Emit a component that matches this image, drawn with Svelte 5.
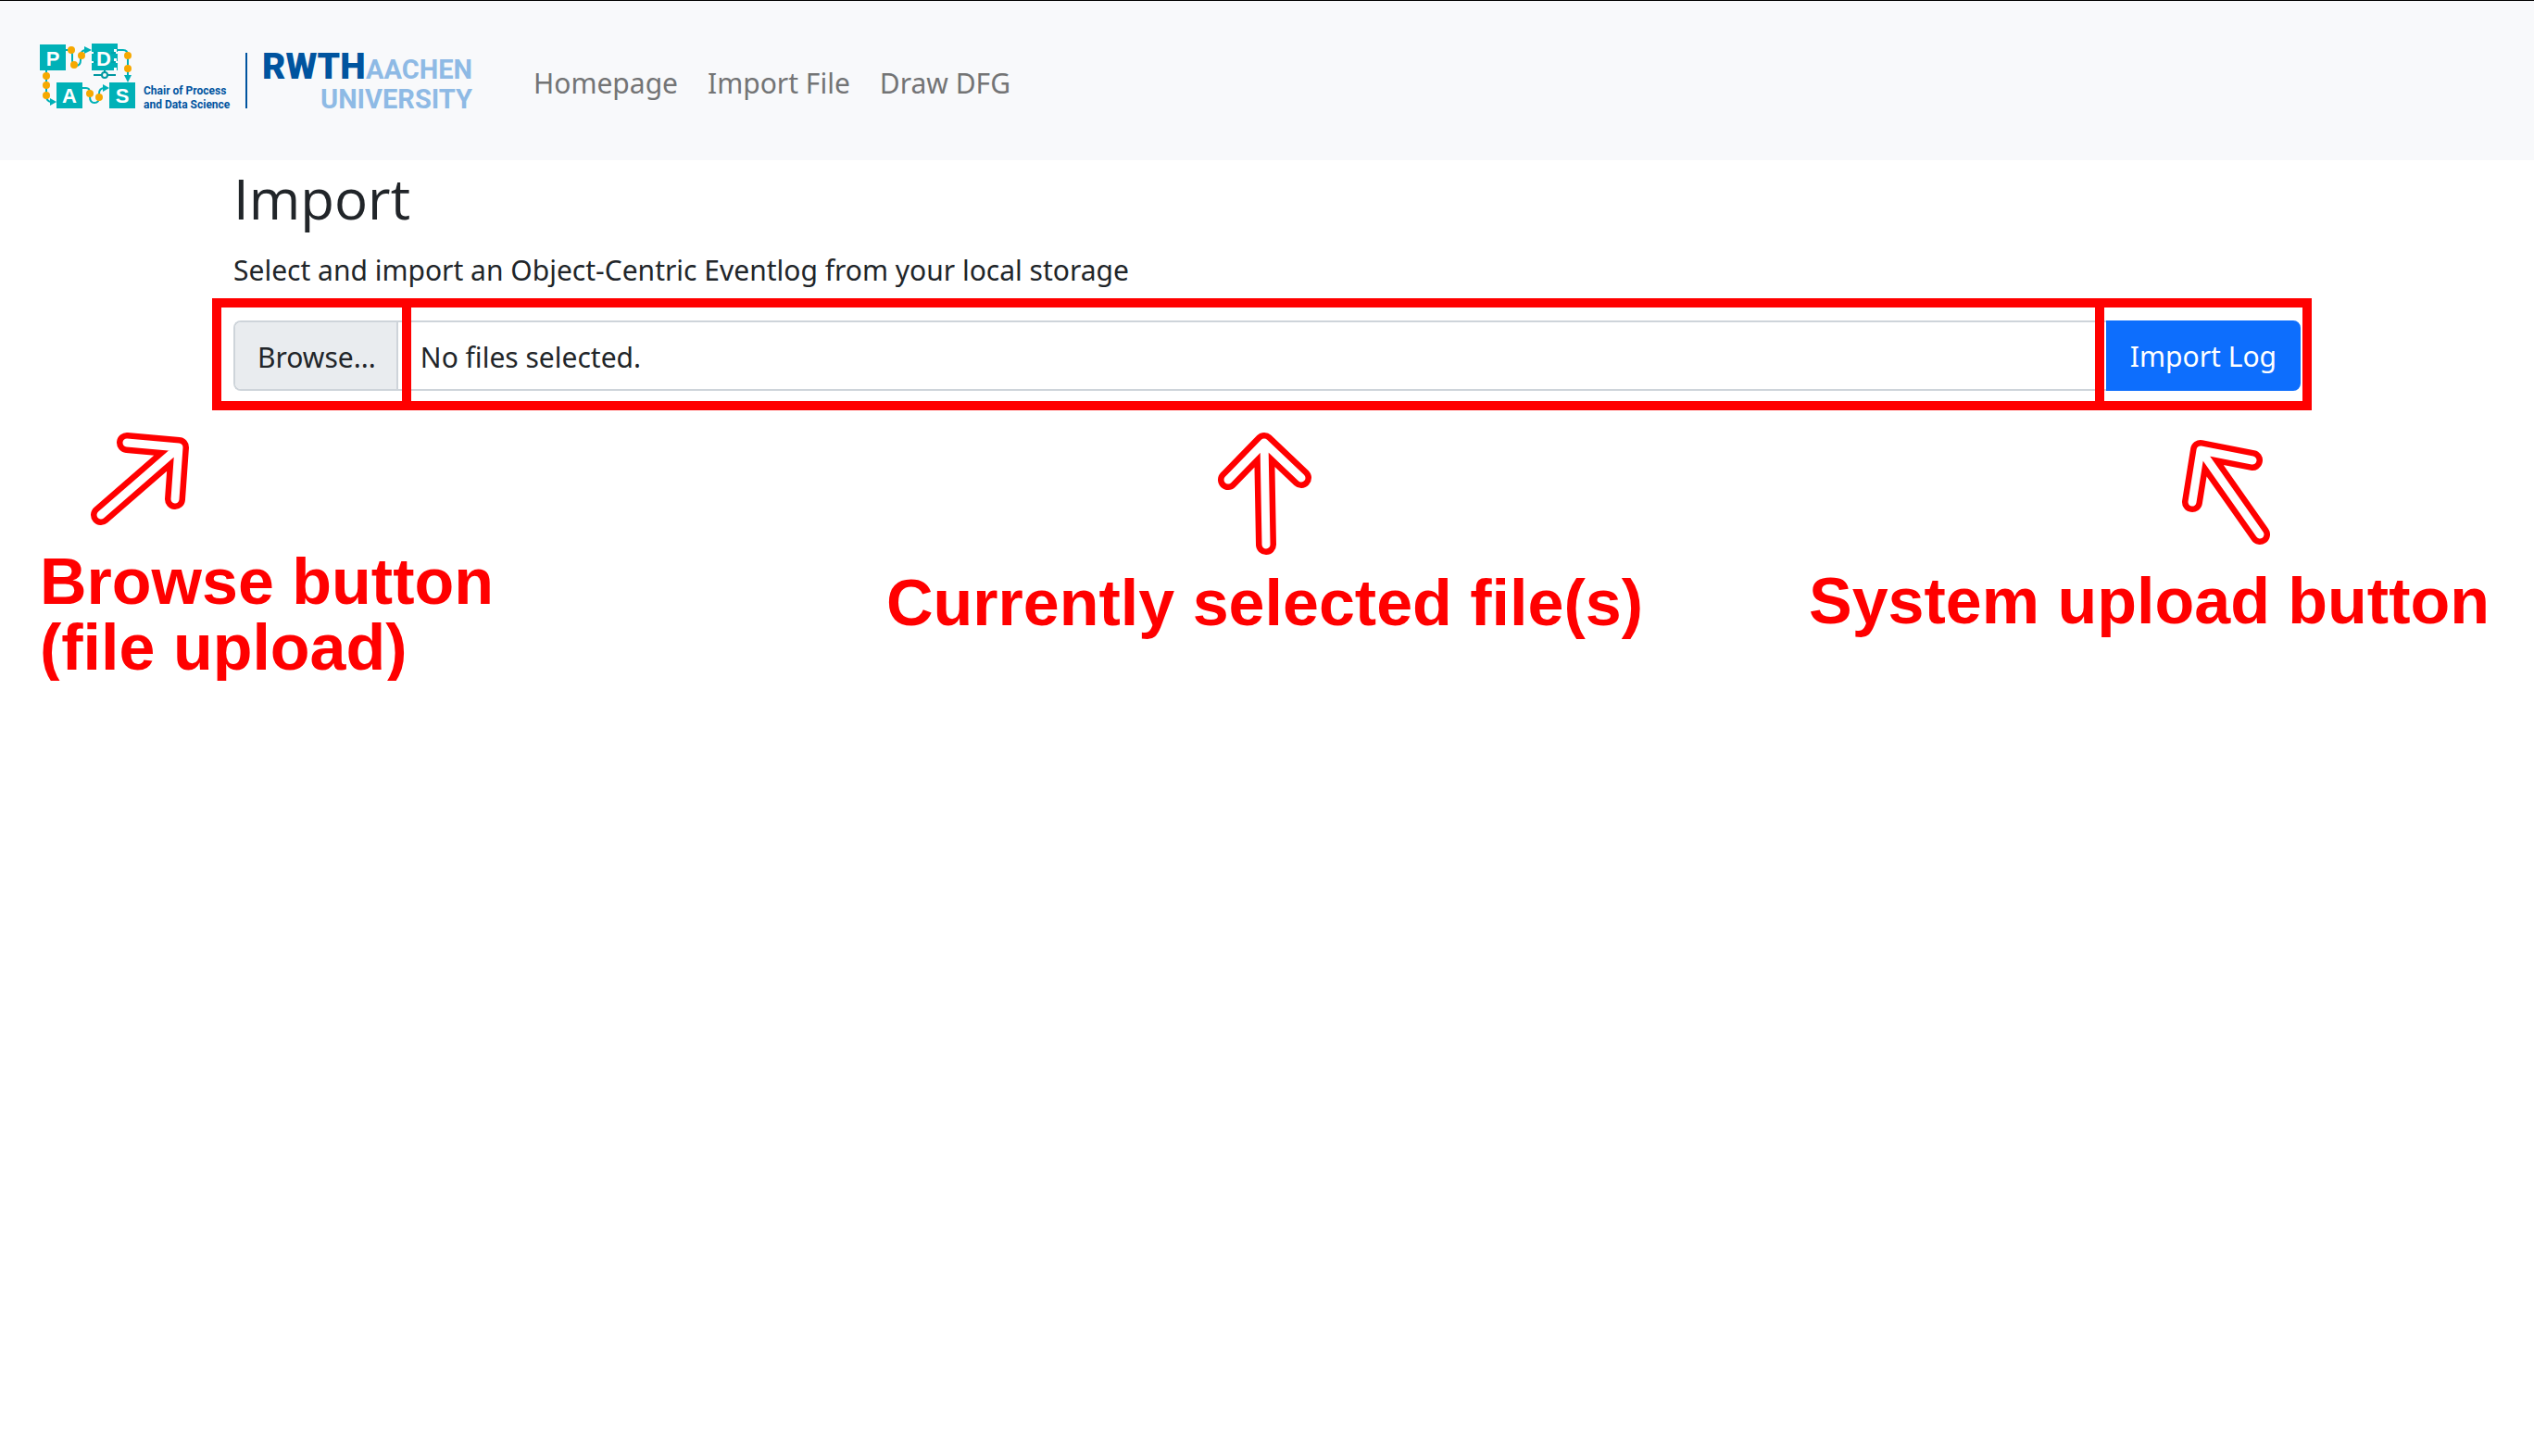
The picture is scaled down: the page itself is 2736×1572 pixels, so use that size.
<script>
  const links = ['Homepage', 'Import File', 'Draw DFG'];

  const callouts = [
    {
      kind: 'to-browse',
      lines: ['Browse button', '(file upload)'],
      width: 200,
      height: 127,
      arrow: 'M94 12 L150 17 L146 73 M150 17 L66 90'
    },
    {
      kind: 'to-name',
      lines: ['Currently selected file(s)'],
      width: 120,
      height: 150,
      arrow: 'M20 52 L59 12 L99 50 M59 12 L61 122'
    },
    {
      kind: 'to-submit',
      lines: ['System upload button'],
      width: 520,
      height: 148,
      arrow: 'M414 76 L423 20 L479 31 M423 20 L487 111'
    }
  ];
</script>

<header>
  <a class="brand" href="#home" aria-label="Chair of Process and Data Science, RWTH Aachen University">
    <svg width="470" height="80" viewBox="42 43 470 80">
      <g fill="none" stroke="#00b1b7" stroke-width="2">
        <path d="M71 54 H74 Q78 54 78 59 V65 Q78 71 82 71 Q87 71 87 65 V61 Q87 54 93 54" />
        <path d="M126 54 H133 Q138 54 138 60 V83" />
        <path d="M50 76 V103 Q50 110 56 110" />
        <path d="M89 95 H93 Q97 95 97 100 V104 Q97 111 102 111 Q107 111 107 105 V101 Q107 95 113 95" />
      </g>
      <g fill="#00b1b7">
        <path d="M91 50 L99 54 L91 58 Z" />
        <path d="M134 81 L138 89 L142 81 Z" />
        <path d="M54 106 L61 110 L54 114 Z" />
        <path d="M111 91 L118 95 L111 99 Z" />
        <rect x="43" y="48" width="28" height="28" />
        <path d="M99 47 H127 V56 H125 V58 H127 V66 H125 V68 H127 V76 H99 V68 H101 V66 H99 V58 H101 V56 H99 Z" />
        <rect x="61" y="89" width="28" height="28" />
        <rect x="118" y="89" width="28" height="28" />
      </g>
      <g fill="#f6a800">
        <circle cx="77" cy="54" r="4" />
        <circle cx="80" cy="70" r="4" />
        <circle cx="88" cy="60" r="4" />
        <circle cx="138" cy="60" r="4" />
        <circle cx="138" cy="74" r="4" />
        <circle cx="50" cy="82" r="4" />
        <circle cx="50" cy="92" r="4" />
        <circle cx="50" cy="103" r="4" />
        <circle cx="97" cy="101" r="4" />
        <circle cx="107" cy="105" r="4" />
      </g>
      <g fill="#fff">
        <rect x="123" y="53" width="3" height="3" />
        <rect x="123" y="63" width="3" height="3" />
        <rect x="123" y="73" width="3" height="3" />
      </g>
      <path d="M120 57 H125 M120 67 H125 M101 57 H105 M101 67 H105" stroke="#0098a1" stroke-width="1" />
      <g fill="#f8f9fb" stroke="#0098a1" stroke-width="2">
        <path d="M101 81 H125 M113 76 V78" />
        <circle cx="113" cy="81" r="3" />
      </g>
      <g class="tile" text-anchor="middle">
        <text x="57" y="71">P</text>
        <text x="112" y="71">D</text>
        <text x="75" y="111">A</text>
        <text x="132" y="111">S</text>
      </g>
      <g class="chair">
        <text x="155" y="102">Chair of Process</text>
        <text x="155" y="117">and Data Science</text>
      </g>
      <rect x="265" y="57" width="2" height="60" fill="#00549f" />
      <text class="rwth" x="283" y="85">RWTH</text>
      <text class="uni" x="510" y="85" text-anchor="end">AACHEN</text>
      <text class="uni" x="510" y="117" text-anchor="end">UNIVERSITY</text>
    </svg>
  </a>
  <nav>
    {#each links as link}
      <a href="#{link}">{link}</a>
    {/each}
  </nav>
</header>

<main>
  <h1>Import</h1>
  <p>Select and import an Object-Centric Eventlog from your local storage</p>
  <form class="group" onsubmit={(e) => e.preventDefault()}>
    <label class="file">
      <input type="file" multiple />
      <span class="browse">Browse...</span>
      <span class="name">No files selected.</span>
    </label>
    <button type="submit">Import Log</button>
    <span class="frame around-browse"></span>
    <span class="frame around-name"></span>
    <span class="frame around-submit"></span>
  </form>
</main>

<section class="callouts">
  {#each callouts as c}
    <div class="callout {c.kind}">
      <svg width={c.width} height={c.height} viewBox="0 0 {c.width} {c.height}" aria-hidden="true">
        <path class="outer" d={c.arrow} />
        <path class="inner" d={c.arrow} />
      </svg>
      {#each c.lines as line}
        <div>{line}</div>
      {/each}
    </div>
  {/each}
</section>

<style>
  :global(body) {
    margin: 0;
    background: #fff;
    color: #212529;
    font-family: 'Noto Sans', 'Open Sans', sans-serif;
    font-size: 30px;
    line-height: 48px;
  }

  header {
    display: flex;
    align-items: center;
    gap: 50px;
    box-sizing: border-box;
    min-height: 173px;
    padding: 0 42px 8px;
    border-top: 1px solid #000;
    background: #f8f9fb;
  }

  .brand {
    display: flex;
  }

  .tile {
    fill: #fff;
    font: bold 22px 'Liberation Sans', sans-serif;
  }

  .chair {
    fill: #00549f;
    font: bold 12px Roboto, sans-serif;
  }

  .rwth {
    fill: #00549f;
    font: 900 39px Roboto, sans-serif;
  }

  .uni {
    fill: #8ebae5;
    font: bold 29px Roboto, sans-serif;
  }

  nav {
    display: flex;
    margin-top: 14px;
  }

  nav a {
    padding: 0 16px;
    color: #737475;
    text-decoration: none;
  }

  nav a:first-child {
    padding-left: 14px;
  }

  main {
    margin: 0 252px;
    padding-top: 3px;
  }

  h1 {
    margin: 0 0 16px;
    font-family: 'Open Sans', sans-serif;
    font-size: 60px;
    font-weight: 400;
    line-height: 76px;
  }

  p {
    margin: 0 0 30px;
  }

  .group {
    position: relative;
    display: flex;
    height: 76px;
  }

  .file {
    display: flex;
    flex: 1;
    overflow: hidden;
    border: 2px solid #ced4da;
    border-right: 0;
    border-radius: 8px 0 0 8px;
    line-height: 76px;
  }

  .file input {
    position: absolute;
    width: 1px;
    height: 1px;
    opacity: 0;
  }

  .browse {
    padding: 0 22px 0 24px;
    border-right: 2px solid #ced4da;
    background: #e9ecef;
  }

  .name {
    padding-left: 24px;
  }

  button {
    padding: 2px 24px 0;
    border: 2px solid #0d6efd;
    border-radius: 0 8px 8px 0;
    background: #0d6efd;
    color: #fff;
    font: inherit;
  }

  .frame {
    position: absolute;
    top: -24px;
    bottom: -21px;
    box-sizing: border-box;
    border: 10px solid #f00;
    pointer-events: none;
  }

  .around-browse {
    left: -23px;
    width: 215px;
  }

  .around-name {
    left: 182px;
    right: 212px;
  }

  .around-submit {
    right: -12px;
    width: 234px;
  }

  .callouts {
    display: grid;
    grid-template-columns: 1fr auto 1fr;
    padding: 44px 48px 0 43px;
    color: #f00;
    font: bold 70px/71px 'Liberation Sans', Arial, sans-serif;
  }

  .callout svg {
    display: block;
  }

  .to-name svg {
    margin: 0 auto;
  }

  .to-submit {
    justify-self: end;
  }

  .outer,
  .inner {
    fill: none;
    stroke: #f00;
    stroke-width: 22px;
    stroke-linecap: round;
    stroke-linejoin: round;
  }

  .inner {
    stroke: #fff;
    stroke-width: 9px;
  }
</style>
